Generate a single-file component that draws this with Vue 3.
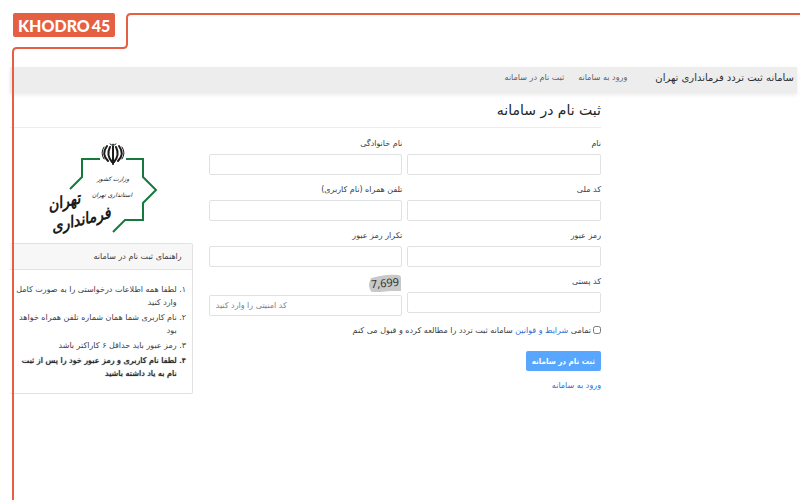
<script setup>
import { ref } from 'vue';

const form = ref({
  name: '',
  family: '',
  nationalCode: '',
  mobile: '',
  password: '',
  passwordRepeat: '',
  postalCode: '',
  captcha: '',
});
const accepted = ref(false);

const fields = [
  { id: 'name', label: 'نام', type: 'text' },
  { id: 'family', label: 'نام خانوادگی', type: 'text' },
  { id: 'nationalCode', label: 'کد ملی', type: 'text' },
  { id: 'mobile', label: 'تلفن همراه (نام کاربری)', type: 'text' },
  { id: 'password', label: 'رمز عبور', type: 'password' },
  { id: 'passwordRepeat', label: 'تکرار رمز عبور', type: 'password' },
  { id: 'postalCode', label: 'کد پستی', type: 'text' },
];

const rules = [
  { text: 'لطفا همه اطلاعات درخواستی را به صورت کامل وارد کنید' },
  { text: 'نام کاربری شما همان شماره تلفن همراه خواهد بود' },
  { text: 'رمز عبور باید حداقل ۶ کاراکتر باشد' },
  { text: 'لطفا نام کاربری و رمز عبور خود را پس از ثبت نام به یاد داشته باشید', bold: true },
];
</script>

<template>
  <div class="page" dir="rtl">
    <div class="brand-row">
      <a href="#" class="brand" dir="ltr">KHODRO<span>45</span></a>
    </div>

    <nav class="navbar">
      <a href="#" class="site-name">سامانه ثبت تردد فرمانداری تهران</a>
      <a href="#" class="nav-link">ورود به سامانه</a>
      <a href="#" class="nav-link">ثبت نام در سامانه</a>
    </nav>

    <main class="content">
      <h1>ثبت نام در سامانه</h1>

      <div class="columns">
        <form @submit.prevent>
          <div class="fields">
            <div v-for="field in fields" :key="field.id" class="field">
              <label :for="field.id">{{ field.label }}</label>
              <input :id="field.id" v-model="form[field.id]" :type="field.type" />
            </div>
            <div class="field">
              <label for="captcha" class="captcha">
                <svg width="34" height="19" viewBox="0 0 34 19">
                  <path d="M3 4L12 2Q22 0 30 1Q33 1 33 4V17L22 17L12 18L4 18Q2 17 1 12Q1 8 2 7Z" fill="#c8c8c8" />
                  <text x="17" y="13" text-anchor="middle" transform="rotate(-5 17 9)">7,699</text>
                </svg>
              </label>
              <input id="captcha" v-model="form.captcha" type="text" placeholder="کد امنیتی را وارد کنید" />
            </div>
          </div>

          <div class="accept">
            <input id="accept" v-model="accepted" type="checkbox" />
            <label for="accept">
              تمامی <a href="#">شرایط و قوانین</a> سامانه ثبت تردد را مطالعه کرده و قبول می کنم
            </label>
          </div>
          <button type="submit">ثبت نام در سامانه</button>
          <a href="#" class="login">ورود به سامانه</a>
        </form>

        <aside>
          <svg class="logo" width="120" height="98" viewBox="2 0 120 98">
            <g fill="none" stroke="#157a3c" stroke-width="2">
              <path d="M61 17H43V35L31 47" />
              <path d="M87 17H104V35L117 48L104 61V78H86L74 90" />
            </g>
            <g fill="none" stroke="#1c1c1c" stroke-linecap="round">
              <path d="M74 4V22" stroke-width="2" />
              <path d="M71 5Q67 13 73 20M77 5Q81 13 75 20" stroke-width="2" />
              <path d="M68 4Q62 12 69 19M80 4Q86 12 79 19" stroke-width="2" />
              <path d="M65 5Q61 11 65 17M83 5Q87 11 83 17" />
              <path d="M71 2Q73 4 74 2Q75 4 77 2" />
            </g>
            <g fill="#1c1c1c" text-anchor="middle">
              <text x="74" y="39" class="logo-small">وزارت کشور</text>
              <text x="73" y="55" class="logo-small">استانداری تهران</text>
              <text x="26" y="65" class="logo-big" transform="rotate(-14 26 65)">تهران</text>
              <text x="43" y="83" class="logo-big" transform="rotate(-14 43 83)">فرمانداری</text>
            </g>
          </svg>

          <section class="card">
            <h2>راهنمای ثبت نام در سامانه</h2>
            <ol>
              <li v-for="rule in rules" :key="rule.text" :class="{ bold: rule.bold }">{{ rule.text }}</li>
            </ol>
          </section>
        </aside>
      </div>
    </main>

    <svg class="frame" aria-hidden="true">
      <path d="M4000 14H131Q127 14 127 18V44Q127 48 123 48H17Q13 48 13 52V4000" />
    </svg>
  </div>
</template>

<style>
body {
  margin: 0;
  background: #fff;
}
</style>

<style scoped>
.page {
  position: relative;
  min-height: 100vh;
  overflow: hidden;
  font-family: 'DejaVu Sans', sans-serif;
  font-size: 8px;
  color: #3c4044;
}
a {
  color: #2f6fd0;
  text-decoration: none;
}
.frame {
  position: absolute;
  inset: 0;
  width: 100%;
  height: 100%;
  pointer-events: none;
}
.frame path {
  fill: none;
  stroke: #e55f43;
  stroke-width: 2;
}
.brand-row {
  display: flex;
  justify-content: flex-end;
  box-sizing: border-box;
  height: 67px;
  padding: 13px;
}
.brand {
  display: flex;
  align-items: center;
  gap: 2px;
  height: 24px;
  padding: 0 5px;
  border-radius: 2px;
  background: #e55f43;
  color: #fff;
  font-family: Lato, sans-serif;
  font-size: 16px;
  font-weight: 900;
}
.navbar {
  display: flex;
  align-items: center;
  gap: 14px;
  box-sizing: border-box;
  height: 26px;
  margin: 0 3px 0 10px;
  padding: 0 3px 6px;
  background: #ededed;
  box-shadow: 0 2px 4px rgba(0, 0, 0, 0.08);
}
.site-name {
  margin-left: 14px;
  color: #2b2f33;
  font-size: 10px;
}
.nav-link {
  color: #5c6064;
}
.content {
  padding: 0 199px 0 10px;
}
h1 {
  margin: 0;
  padding: 5px 0;
  border-bottom: 1px solid #ececec;
  color: #212529;
  font-size: 14px;
  font-weight: 400;
  line-height: 24px;
}
.columns {
  display: grid;
  grid-template-columns: 393fr 183fr;
  gap: 16px;
  align-items: start;
}
.fields {
  display: grid;
  grid-template-columns: 1fr 1fr;
  gap: 7px 5px;
  padding-top: 8px;
}
.field {
  display: flex;
  flex-direction: column;
}
.field label {
  height: 18px;
  line-height: 16px;
}
.field .captcha {
  height: 21px;
}
.captcha svg {
  display: block;
  direction: ltr;
}
.captcha text {
  fill: #333;
  font-family: 'Noto Sans', sans-serif;
  font-size: 11px;
}
.field input {
  box-sizing: border-box;
  width: 100%;
  height: 21px;
  padding: 0 6px;
  border: 1px solid #dfe2e5;
  border-radius: 2px;
  background: #fff;
  color: #495057;
  font-family: inherit;
  font-size: 8px;
}
#captcha {
  text-align: left;
}
.field input::placeholder {
  color: #7c8288;
}
.accept {
  display: flex;
  align-items: center;
  gap: 2px;
  height: 14px;
  margin-top: 7px;
}
.accept input {
  width: 8px;
  height: 8px;
  margin: 0;
}
button {
  display: block;
  height: 20px;
  margin: 14px 0 8px;
  padding: 0 6px;
  border: 0;
  border-radius: 2px;
  background: #59a6ff;
  color: #fff;
  font-family: 'DejaVu Sans Condensed', 'DejaVu Sans', sans-serif;
  font-size: 8px;
  font-weight: 700;
}
.login {
  display: inline-block;
  line-height: 14px;
}
.logo {
  display: block;
  overflow: visible;
  margin: 14px auto 3px;
}
.logo-small {
  font-size: 6px;
  font-style: italic;
}
.logo-big {
  font-family: 'DejaVu Sans Condensed', 'DejaVu Sans', sans-serif;
  font-size: 16px;
  font-style: italic;
  font-weight: 700;
}
.card {
  border: 1px solid #e2e2e2;
  border-left: 0;
  border-radius: 2px;
}
h2 {
  margin: 0;
  padding: 0 10px;
  border-bottom: 1px solid #e2e2e2;
  background: #f7f7f7;
  font-size: 8px;
  font-weight: 400;
  line-height: 25px;
}
ol {
  display: flex;
  flex-direction: column;
  gap: 2px;
  margin: 0;
  padding: 13px 15px 13px 4px;
  list-style: persian;
  line-height: 13px;
}
.bold {
  color: #212529;
  text-shadow: 0 0 1px #212529;
}
</style>
